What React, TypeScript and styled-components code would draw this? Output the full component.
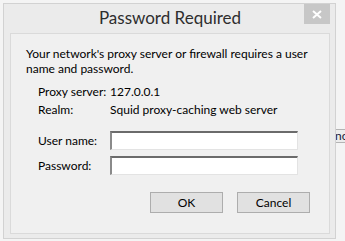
import React from "react";
import styled, { createGlobalStyle } from "styled-components";

const GlobalStyle = createGlobalStyle`
  html, body {
    margin: 0;
    padding: 0;
    background: #f4f4f4;
    font-family: Lato, "Liberation Sans", sans-serif;
    overflow: hidden;
  }
`;

const Desktop = styled.div`
  display: flex;
  width: 345px;
  height: 241px;
  padding: 3px 0 0 3px;
  box-sizing: border-box;
`;

const Window = styled.div`
  flex: none;
  width: 333px;
  height: 236px;
  box-sizing: border-box;
  background: #ebebeb;
  border: 1px solid #d2d2d2;
  display: flex;
  flex-direction: column;
  padding: 0 5px 4px 6px;
`;

const TitleBar = styled.div`
  height: 29px;
  display: grid;
  grid-template-columns: 1fr auto 1fr;
  align-items: start;
`;

const Title = styled.div`
  grid-column: 2;
  margin-top: 3px;
  font-size: 17px;
  color: #2e2e2e;
  font-family: Lato, sans-serif;
`;

const CloseButton = styled.div`
  grid-column: 3;
  justify-self: end;
  width: 26px;
  height: 20px;
  background: #c7c7c7;
  display: flex;
  align-items: center;
  justify-content: center;
`;

const Panel = styled.div`
  flex: 1;
  background: #f0f0f0;
  border: 1px solid #dadada;
  padding: 12px 14px 0 15px;
  display: flex;
  flex-direction: column;
  font-size: 12px;
  color: #000;
`;

const Message = styled.div`
  line-height: 15px;
  white-space: nowrap;
`;

const InfoTable = styled.div`
  display: grid;
  grid-template-columns: 72px auto;
  row-gap: 3px;
  margin: 8px 0 0 12px;
  line-height: 15px;
  white-space: nowrap;
`;

const FieldGrid = styled.div`
  display: grid;
  grid-template-columns: 72px 188px;
  row-gap: 6px;
  align-items: center;
  margin: 14px 0 0 12px;
  white-space: nowrap;
`;

const Input = styled.input`
  box-sizing: border-box;
  height: 19px;
  width: 188px;
  background: #fff;
  border-style: solid;
  border-width: 2px 1px 1px 2px;
  border-color: #6b6b6b #e3e3e3 #e3e3e3 #8a8a8a;
  outline: none;
  padding: 0 3px;
  font-size: 12px;
`;

const ButtonRow = styled.div`
  display: flex;
  justify-content: flex-end;
  gap: 14px;
  margin: 17px 5px 0 0;
`;

const Button = styled.button`
  box-sizing: border-box;
  width: 73px;
  height: 21px;
  background: #e1e1e1;
  border: 1px solid #adadad;
  font-family: Lato, "Liberation Sans", sans-serif;
  font-size: 12px;
  color: #000;
  padding: 0;
`;

const BehindStrip = styled.div`
  flex: 1;
  overflow: hidden;
  padding-top: 126px;
`;

const BehindButton = styled.div`
  height: 12px;
  border-top: 1px solid #b4b4b4;
  border-bottom: 1px solid #b4b4b4;
  background: #ececec;
  font-size: 12px;
  line-height: 12px;
  color: #1a1a3a;
  white-space: nowrap;
  text-indent: -1px;
`;

export default function App() {
  return (
    <>
      <GlobalStyle />
      <Desktop>
        <Window>
          <TitleBar>
            <Title>Password Required</Title>
            <CloseButton>
              <svg width="10" height="9" viewBox="0 0 10 9">
                <path d="M1 1 L9 8 M9 1 L1 8" stroke="#fff" strokeWidth="2" />
              </svg>
            </CloseButton>
          </TitleBar>
          <Panel>
            <Message>
              Your network's proxy server or firewall requires a user
              <br />
              name and password.
            </Message>
            <InfoTable>
              <span>Proxy server:</span>
              <span>127.0.0.1</span>
              <span>Realm:</span>
              <span>Squid proxy-caching web server</span>
            </InfoTable>
            <FieldGrid>
              <span>User name:</span>
              <Input type="text" />
              <span>Password:</span>
              <Input type="password" />
            </FieldGrid>
            <ButtonRow>
              <Button>OK</Button>
              <Button>Cancel</Button>
            </ButtonRow>
          </Panel>
        </Window>
        <BehindStrip>
          <BehindButton>nc</BehindButton>
        </BehindStrip>
      </Desktop>
    </>
  );
}
